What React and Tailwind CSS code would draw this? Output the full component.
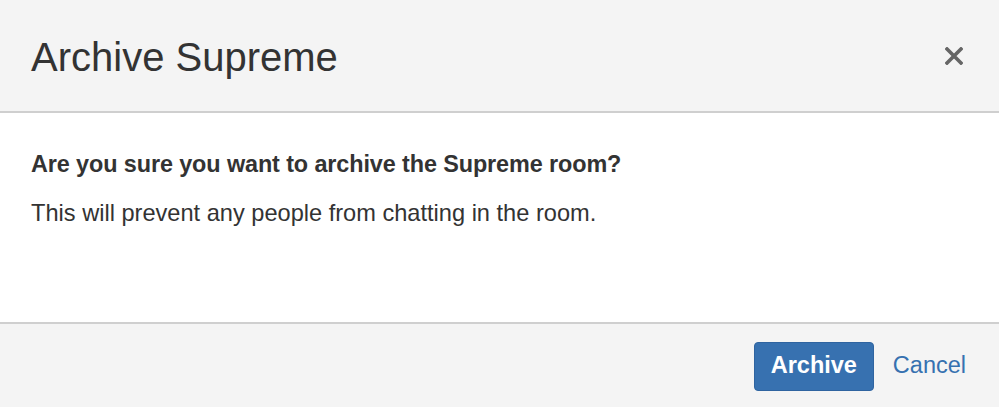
import React from "react";

function App() {
  return (
    <div
      className="w-[999px] h-[407px] flex flex-col bg-white text-[#333333]"
      style={{ fontFamily: '"Liberation Sans", Arial, sans-serif' }}
    >
      <header className="h-[113px] shrink-0 flex items-center justify-between pl-[31px] pr-[36px] bg-[#f4f4f4] border-b-2 border-[#cfcfcf]">
        <h2 className="text-[40px] leading-none font-normal text-[#333333] pt-[2px]">
          Archive Supreme
        </h2>
        <button className="text-[#6a6a6a] leading-none">
          <svg width="18" height="18" viewBox="0 0 18 18">
            <path d="M2 2 L16 16 M16 2 L2 16" stroke="#666666" strokeWidth="3.6" strokeLinecap="square" />
          </svg>
        </button>
      </header>

      <main className="flex-1 px-[31px] pt-[37px]">
        <p className="text-[23.4px] font-bold leading-[28px] tracking-[-0.1px]">
          Are you sure you want to archive the Supreme room?
        </p>
        <p className="text-[23.6px] leading-[28px] mt-[21px]">
          This will prevent any people from chatting in the room.
        </p>
      </main>

      <footer className="h-[85px] shrink-0 flex items-center justify-end gap-[19px] pr-[33px] pt-[1px] bg-[#f4f4f4] border-t-2 border-[#cfcfcf]">
        <button className="w-[120px] h-[49px] rounded-[4px] bg-[#3771b0] border border-[#2f64a0] text-white text-[23.5px] font-bold">
          Archive
        </button>
        <button className="text-[#3671b0] text-[23.5px]">Cancel</button>
      </footer>
    </div>
  );
}

export default App;
